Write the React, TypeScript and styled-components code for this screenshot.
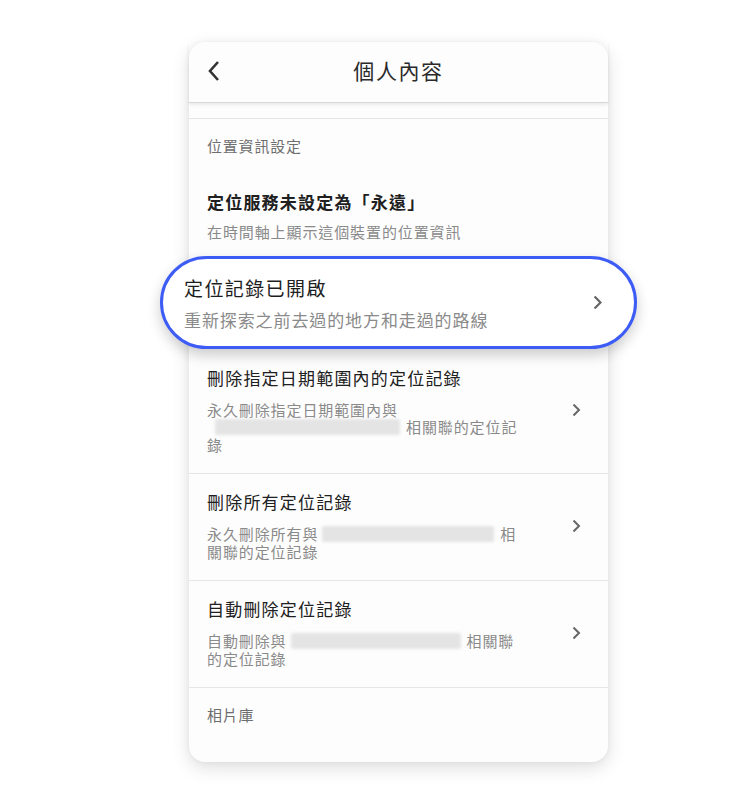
import React from "react";
import styled, { createGlobalStyle } from "styled-components";

const Global = createGlobalStyle`
  html, body {
    margin: 0;
    padding: 0;
    background: #ffffff;
  }
  body {
    font-family: "Noto Sans CJK TC", "Noto Sans", sans-serif;
  }
`;

const Page = styled.div`
  width: 750px;
  min-height: 800px;
  padding-top: 42px;
  box-sizing: border-box;
  display: flex;
  justify-content: center;
`;

const Card = styled.div`
  width: 419px;
  margin-left: 47px;
  background: #fdfdfd;
  border-radius: 16px;
  box-shadow: 0 6px 18px rgba(0, 0, 0, 0.13), 0 0 6px rgba(0, 0, 0, 0.05);
  padding-bottom: 37px;
  align-self: flex-start;
`;

const Header = styled.div`
  height: 60px;
  display: flex;
  align-items: center;
  justify-content: center;
  position: relative;
  border-bottom: 1px solid #d8d8d8;
  box-shadow: 0 2px 3px rgba(0, 0, 0, 0.08);
`;

const BackButton = styled.div`
  position: absolute;
  left: 17px;
  top: 17px;
  width: 16px;
  height: 24px;
  display: flex;
`;

const Title = styled.div`
  font-size: 21px;
  letter-spacing: 1.6px;
  color: #2a2a2a;
  line-height: 28px;
  margin-bottom: 4px;
`;

const Spacer = styled.div`
  height: 15px;
  border-bottom: 1px solid #e6e6e6;
`;

const SectionLabel = styled.div`
  padding: 17px 18px 0;
  font-size: 15px;
  letter-spacing: 0.8px;
  line-height: 20px;
  color: #6e6e6e;
`;

const Row = styled.div<{ $divider?: boolean; $top?: number }>`
  display: flex;
  align-items: center;
  padding: ${(p) => p.$top ?? 17}px 26px 20px 18px;
  border-bottom: ${(p) => (p.$divider ? "1px solid #e6e6e6" : "none")};
`;

const Texts = styled.div<{ $wide?: boolean }>`
  flex: 1;
  max-width: ${(p) => (p.$wide ? "none" : "325px")};
`;

const RowTitle = styled.div<{ $bold?: boolean }>`
  font-size: 17px;
  letter-spacing: 1.2px;
  line-height: 22px;
  color: #202020;
  font-weight: ${(p) => (p.$bold ? 700 : 400)};
`;

const RowSub = styled.div<{ $gap?: number }>`
  margin-top: ${(p) => p.$gap ?? 12}px;
  font-size: 15px;
  letter-spacing: 0.9px;
  line-height: 17.5px;
  color: #8a8a8a;
`;

const Blur = styled.span<{ $w: number; $left?: number }>`
  display: inline-block;
  width: ${(p) => p.$w}px;
  height: 16px;
  vertical-align: -2px;
  margin: 0 6px 0 ${(p) => p.$left ?? 4}px;
  background: #e4e4e4;
  filter: blur(1.5px);
  border-radius: 2px;
`;

const Chevron = styled.div`
  margin-left: auto;
  width: 10px;
  display: flex;
  justify-content: center;
`;

const Pill = styled.div`
  margin: -5px -29px 1px;
  height: 93px;
  box-sizing: border-box;
  border: 3.5px solid #3d5cf6;
  border-radius: 48px;
  background: #ffffff;
  box-shadow: 0 6px 14px rgba(0, 0, 0, 0.2);
  display: flex;
  align-items: center;
  padding: 0 32px 0 21px;
  position: relative;
`;

const PillTexts = styled.div`
  flex: 1;
  padding-top: 2px;
`;

const PillTitle = styled.div`
  font-size: 19px;
  letter-spacing: 1.4px;
  line-height: 26px;
  color: #1e1e1e;
`;

const PillSub = styled.div`
  margin-top: 8px;
  font-size: 17px;
  letter-spacing: 0.9px;
  line-height: 22px;
  color: #8a8a8a;
`;

const ChevronIcon = ({ size = 12 }: { size?: number }) => (
  <svg width={size * 0.6} height={size} viewBox="0 0 6 10">
    <path d="M1 1 L5 5 L1 9" fill="none" stroke="#666" strokeWidth="1.7" strokeLinecap="square" />
  </svg>
);

const Item = ({
  title,
  sub,
  divider,
}: {
  title: string;
  sub: React.ReactNode;
  divider?: boolean;
}) => (
  <Row $divider={divider}>
    <Texts>
      <RowTitle>{title}</RowTitle>
      <RowSub>{sub}</RowSub>
    </Texts>
    <Chevron>
      <ChevronIcon />
    </Chevron>
  </Row>
);

export default function App() {
  return (
    <Page>
      <Global />
      <Card>
        <Header>
          <BackButton>
            <svg width="16" height="24" viewBox="0 0 16 24">
              <path d="M12 3 L4 12 L12 21" fill="none" stroke="#333" strokeWidth="2.6" />
            </svg>
          </BackButton>
          <Title>個人內容</Title>
        </Header>
        <Spacer />
        <SectionLabel>位置資訊設定</SectionLabel>
        <Row $top={35}>
          <Texts $wide>
            <RowTitle $bold>定位服務未設定為「永遠」</RowTitle>
            <RowSub $gap={10}>在時間軸上顯示這個裝置的位置資訊</RowSub>
          </Texts>
        </Row>
        <Pill>
          <PillTexts>
            <PillTitle>定位記錄已開啟</PillTitle>
            <PillSub>重新探索之前去過的地方和走過的路線</PillSub>
          </PillTexts>
          <ChevronIcon size={13} />
        </Pill>
        <Item
          divider
          title="刪除指定日期範圍內的定位記錄"
          sub={
            <>
              永久刪除指定日期範圍內與
              <br />
              <Blur $w={185} $left={8} />
              相關聯的定位記
              <br />錄
            </>
          }
        />
        <Item
          divider
          title="刪除所有定位記錄"
          sub={
            <>
              永久刪除所有與
              <Blur $w={172} />相
              <br />
              關聯的定位記錄
            </>
          }
        />
        <Item
          divider
          title="自動刪除定位記錄"
          sub={
            <>
              自動刪除與
              <Blur $w={170} />
              相關聯
              <br />
              的定位記錄
            </>
          }
        />
        <SectionLabel>相片庫</SectionLabel>
      </Card>
    </Page>
  );
}
